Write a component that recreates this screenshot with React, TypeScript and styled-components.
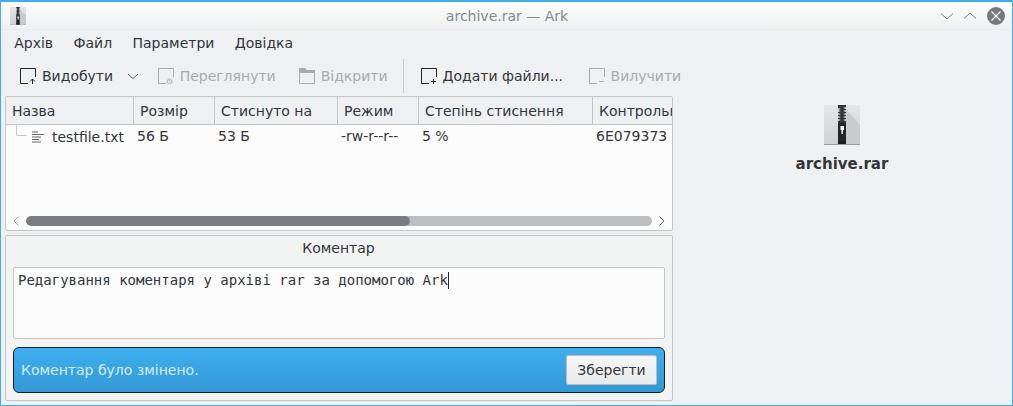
import React from "react";
import styled, { createGlobalStyle } from "styled-components";

const GlobalStyle = createGlobalStyle`
  html, body { margin: 0; padding: 0; background: #eff0f1; }
  body { font-family: "DejaVu Sans", sans-serif; font-size: 14px; color: #31363b; }
`;

const Window = styled.div`
  box-sizing: border-box;
  width: 1013px;
  height: 406px;
  border: 1px solid #3daee9;
  border-top-width: 2px;
  display: flex;
  flex-direction: column;
  overflow: hidden;
  background: #eff0f1;
`;

const TitleBar = styled.div`
  height: 27px;
  display: grid;
  grid-template-columns: 1fr auto 1fr;
  align-items: center;
  padding: 0 7px 0 9px;
  background: linear-gradient(#fcfcfc, #eff0f1);
  border-bottom: 1px solid #eaebec;
`;

const TitleText = styled.div`
  color: #7f8c8d;
  margin-right: 1px;
`;

const WinControls = styled.div`
  display: flex;
  align-items: center;
  justify-content: flex-end;
  gap: 5px;
`;

const CloseButton = styled.svg`
  margin-left: 3px;
`;

const MenuBar = styled.div`
  height: 27px;
  display: flex;
  align-items: center;
  padding-left: 3px;
`;

const MenuItem = styled.span`
  padding: 0 10.2px;
  line-height: 27px;
`;

const ToolBar = styled.div`
  height: 39px;
  display: flex;
  align-items: center;
  padding: 0 0 2px 7.5px;
  box-sizing: border-box;
`;

const ToolButton = styled.div<{ $off?: boolean }>`
  display: flex;
  align-items: center;
  gap: 6px;
  padding: 0 11.5px;
  color: ${(p) => (p.$off ? "#a7abae" : "#31363b")};
  white-space: nowrap;
`;

const RemoveButton = styled(ToolButton)`
  margin-left: 2.5px;
`;

const ToolChevron = styled.svg`
  margin-right: 5.5px;
`;

const ToolSep = styled.div`
  width: 1px;
  height: 34px;
  background: #c9cbcc;
  margin: 0 5.5px 0 3.5px;
`;

const Body = styled.div`
  flex: 1;
  display: flex;
  padding: 0 0 4px 4px;
  min-height: 0;
`;

const LeftColumn = styled.div`
  width: 668px;
  display: flex;
  flex-direction: column;
  gap: 4px;
`;

const TablePanel = styled.div`
  height: 135px;
  box-sizing: border-box;
  border: 1px solid #c4c5c6;
  border-radius: 2px;
  background: #fcfcfc;
  display: flex;
  flex-direction: column;
  overflow: hidden;
`;

const Row = styled.div`
  display: grid;
  grid-template-columns: 128px 81px 123px 81px 174px 1fr;
`;

const HeaderRow = styled(Row)`
  height: 28px;
  box-sizing: border-box;
  background: #eff0f1;
  border-bottom: 1px solid #c4c5c6;
`;

const HeaderCell = styled.div`
  line-height: 28px;
  padding-left: 6px;
  border-right: 1px solid #c4c5c6;
  white-space: nowrap;
  overflow: hidden;
  &:last-child { border-right: 0; }
`;

const DataRow = styled(Row)`
  height: 24px;
`;

const DataCell = styled.div`
  line-height: 22px;
  padding-left: 3px;
  white-space: nowrap;
  overflow: hidden;
`;

const NameCell = styled(DataCell)`
  display: flex;
  align-items: center;
  padding-left: 10px;
`;

const TreeLine = styled.svg`
  margin-right: 3px;
  align-self: flex-start;
`;

const FileGlyph = styled.svg`
  margin-right: 8px;
`;

const Spacer = styled.div`
  flex: 1;
`;

const ScrollRow = styled.div`
  height: 14px;
  display: flex;
  align-items: flex-start;
  padding: 0 6px;
  gap: 6px;
`;

const ScrollTrack = styled.div`
  flex: 1;
  height: 10px;
  border-radius: 5px;
  background: #bdbec0;
  overflow: hidden;
`;

const ScrollThumb = styled.div`
  height: 100%;
  border-radius: 5px;
  background: #7a7c7f;
`;

const CommentPanel = styled.div`
  flex: 1;
  box-sizing: border-box;
  border: 1px solid #c4c5c6;
  border-radius: 2px;
  background: #f2f3f3;
  display: flex;
  flex-direction: column;
  padding: 0 7px 7px;
`;

const CommentTitle = styled.div`
  text-align: center;
  line-height: 24px;
  height: 31px;
  margin-right: 1px;
`;

const CommentBox = styled.div`
  height: 72px;
  box-sizing: border-box;
  border: 1px solid #c4c5c6;
  border-radius: 2px;
  background: #fcfcfc;
  padding: 3px 4px;
  font-family: "DejaVu Sans Mono", monospace;
  font-size: 14px;
  line-height: 18px;
  white-space: pre;
`;

const Caret = styled.span`
  display: inline-block;
  width: 1px;
  height: 17px;
  background: #232629;
  vertical-align: -4px;
`;

const MessageBar = styled.div`
  margin-top: 8px;
  height: 46px;
  box-sizing: border-box;
  border: 1px solid #1a1c1e;
  border-radius: 6px;
  background: linear-gradient(#3daff0, #3498d6);
  display: flex;
  align-items: center;
  justify-content: space-between;
  padding: 0 7px;
  color: #d6ecf8;
`;

const SaveButton = styled.div`
  width: 91px;
  height: 30px;
  box-sizing: border-box;
  border: 1px solid #b9bdc0;
  border-radius: 2px;
  background: linear-gradient(#f6f6f7, #e9eaeb);
  color: #31363b;
  text-align: center;
  line-height: 28px;
`;

const InfoPanel = styled.div`
  flex: 1;
  display: flex;
  flex-direction: column;
  align-items: center;
  padding: 9px 1px 0 0;
`;

const InfoName = styled.div`
  margin-top: 10px;
  font-weight: bold;
  font-size: 15px;
`;

const ActionIcon = ({ off, mark }: { off?: boolean; mark: "up" | "plus" | "minus" | "search" }) => {
  const c = off ? "#a7abae" : "#232629";
  return (
    <svg width="16" height="16" viewBox="0 0 16 16" fill="none" stroke={c} strokeWidth="1">
      <path d="M8 15.5H0.5V0.5H15.5V9" />
      {mark === "up" && <path d="M12.5 16V11M10 13.5l2.5-2.5 2.5 2.5" />}
      {mark === "plus" && <path d="M12.5 11V16M10 13.5H15" />}
      {mark === "minus" && <path d="M10 13.5H15" />}
      {mark === "search" && <path d="M9 13.5a2.5 2.5 0 1 0 0-.01M10.8 12L13.5 15" />}
    </svg>
  );
};

const FolderIcon = () => (
  <svg width="16" height="16" viewBox="0 0 16 16">
    <path d="M0 0h6l2 2h8v2H0z" fill="#a7abae" />
    <path d="M.5 4.5h15v11H.5z" fill="none" stroke="#a7abae" />
  </svg>
);

const FileIcon = () => (
  <FileGlyph width="12" height="13" viewBox="0 0 12 13" stroke="#5e6367" strokeWidth="1">
    <path d="M0 1h6M0 3.5h12M0 6h9M0 8.5h7M0 11h9" />
  </FileGlyph>
);

const ZipIcon = ({ width, height }: { width: number; height: number }) => (
  <svg width={width} height={height} viewBox="0 0 36 40" preserveAspectRatio="none">
    <defs>
      <linearGradient id="zipBody" x1="0" y1="0" x2="0" y2="1">
        <stop offset="0" stopColor="#e4e6e7" />
        <stop offset="1" stopColor="#cfd2d4" />
      </linearGradient>
    </defs>
    <rect width="36" height="39" fill="url(#zipBody)" />
    <path d="M22 4L36 20V39H22z" fill="#c8cccf" />
    <rect y="39" width="36" height="1" fill="#9b9d9f" />
    <rect x="14" y="18" width="8" height="21" fill="#232629" />
    <rect x="14" y="36" width="8" height="3" fill="#1b1d1f" />
    <path d="M14 0h8v2l-3 1 3 1v1l-3 1 3 1v1l-3 1 3 1v1l-3 1 3 1v1l-3 1 3 1v2h-8v-2l3-1-3-1v-1l3-1-3-1v-1l3-1-3-1v-1l3-1-3-1V5l3-1-3-1z" fill="#31363b" />
    <path d="M16.5 21h3.5v4h-1v4h-1.5v-4h-1z" fill="#fcfcfc" />
  </svg>
);

const App = () => (
  <Window>
    <GlobalStyle />
    <TitleBar>
      <ZipIcon width={16} height={18} />
      <TitleText>archive.rar — Ark</TitleText>
      <WinControls>
        <svg width="18" height="18" viewBox="0 0 18 18" fill="none" stroke="#7a7c7f">
          <path d="M3 6.5L9 12l6-5.5" />
        </svg>
        <svg width="18" height="18" viewBox="0 0 18 18" fill="none" stroke="#7a7c7f">
          <path d="M3 11.5L9 6l6 5.5" />
        </svg>
        <CloseButton width="18" height="18" viewBox="0 0 18 18" fill="none">
          <circle cx="9" cy="9" r="9" fill="#77797c" />
          <path d="M4.5 4.5l9 9M13.5 4.5l-9 9" stroke="#fcfcfc" strokeWidth="1.2" />
        </CloseButton>
      </WinControls>
    </TitleBar>
    <MenuBar>
      <MenuItem>Архів</MenuItem>
      <MenuItem>Файл</MenuItem>
      <MenuItem>Параметри</MenuItem>
      <MenuItem>Довідка</MenuItem>
    </MenuBar>
    <ToolBar>
      <ToolButton>
        <ActionIcon mark="up" />
        Видобути
      </ToolButton>
      <ToolChevron width="16" height="16" viewBox="0 0 16 16" fill="none" stroke="#5e6367">
        <path d="M3 6L8 10.5 13 6" />
      </ToolChevron>
      <ToolButton $off>
        <ActionIcon off mark="search" />
        Переглянути
      </ToolButton>
      <ToolButton $off>
        <FolderIcon />
        Відкрити
      </ToolButton>
      <ToolSep />
      <ToolButton>
        <ActionIcon mark="plus" />
        Додати файли...
      </ToolButton>
      <RemoveButton $off>
        <ActionIcon off mark="minus" />
        Вилучити
      </RemoveButton>
    </ToolBar>
    <Body>
      <LeftColumn>
        <TablePanel>
          <HeaderRow>
            <HeaderCell>Назва</HeaderCell>
            <HeaderCell>Розмір</HeaderCell>
            <HeaderCell>Стиснуто на</HeaderCell>
            <HeaderCell>Режим</HeaderCell>
            <HeaderCell>Степінь стиснення</HeaderCell>
            <HeaderCell>Контрольна сума</HeaderCell>
          </HeaderRow>
          <DataRow>
            <NameCell>
              <TreeLine width="13" height="12" viewBox="0 0 13 12" fill="none" stroke="#c8c9ca">
                <path d="M.5 0v10.5H11" />
              </TreeLine>
              <FileIcon />
              testfile.txt
            </NameCell>
            <DataCell>56 Б</DataCell>
            <DataCell>53 Б</DataCell>
            <DataCell>-rw-r--r--</DataCell>
            <DataCell>5 %</DataCell>
            <DataCell>6E079373</DataCell>
          </DataRow>
          <Spacer />
          <ScrollRow>
            <svg width="8" height="10" viewBox="0 0 8 10" fill="none" stroke="#a0a2a4">
              <path d="M6.5 .5L2 5l4.5 4.5" />
            </svg>
            <ScrollTrack>
              <ScrollThumb style={{ width: `${(384 / 626) * 100}%` }} />
            </ScrollTrack>
            <svg width="8" height="10" viewBox="0 0 8 10" fill="none" stroke="#5e6367">
              <path d="M1.5 .5L6 5 1.5 9.5" />
            </svg>
          </ScrollRow>
        </TablePanel>
        <CommentPanel>
          <CommentTitle>Коментар</CommentTitle>
          <CommentBox>
            Редагування коментаря у архіві rar за допомогою Ark
            <Caret />
          </CommentBox>
          <MessageBar>
            Коментар було змінено.
            <SaveButton>Зберегти</SaveButton>
          </MessageBar>
        </CommentPanel>
      </LeftColumn>
      <InfoPanel>
        <ZipIcon width={36} height={40} />
        <InfoName>archive.rar</InfoName>
      </InfoPanel>
    </Body>
  </Window>
);

export default App;
